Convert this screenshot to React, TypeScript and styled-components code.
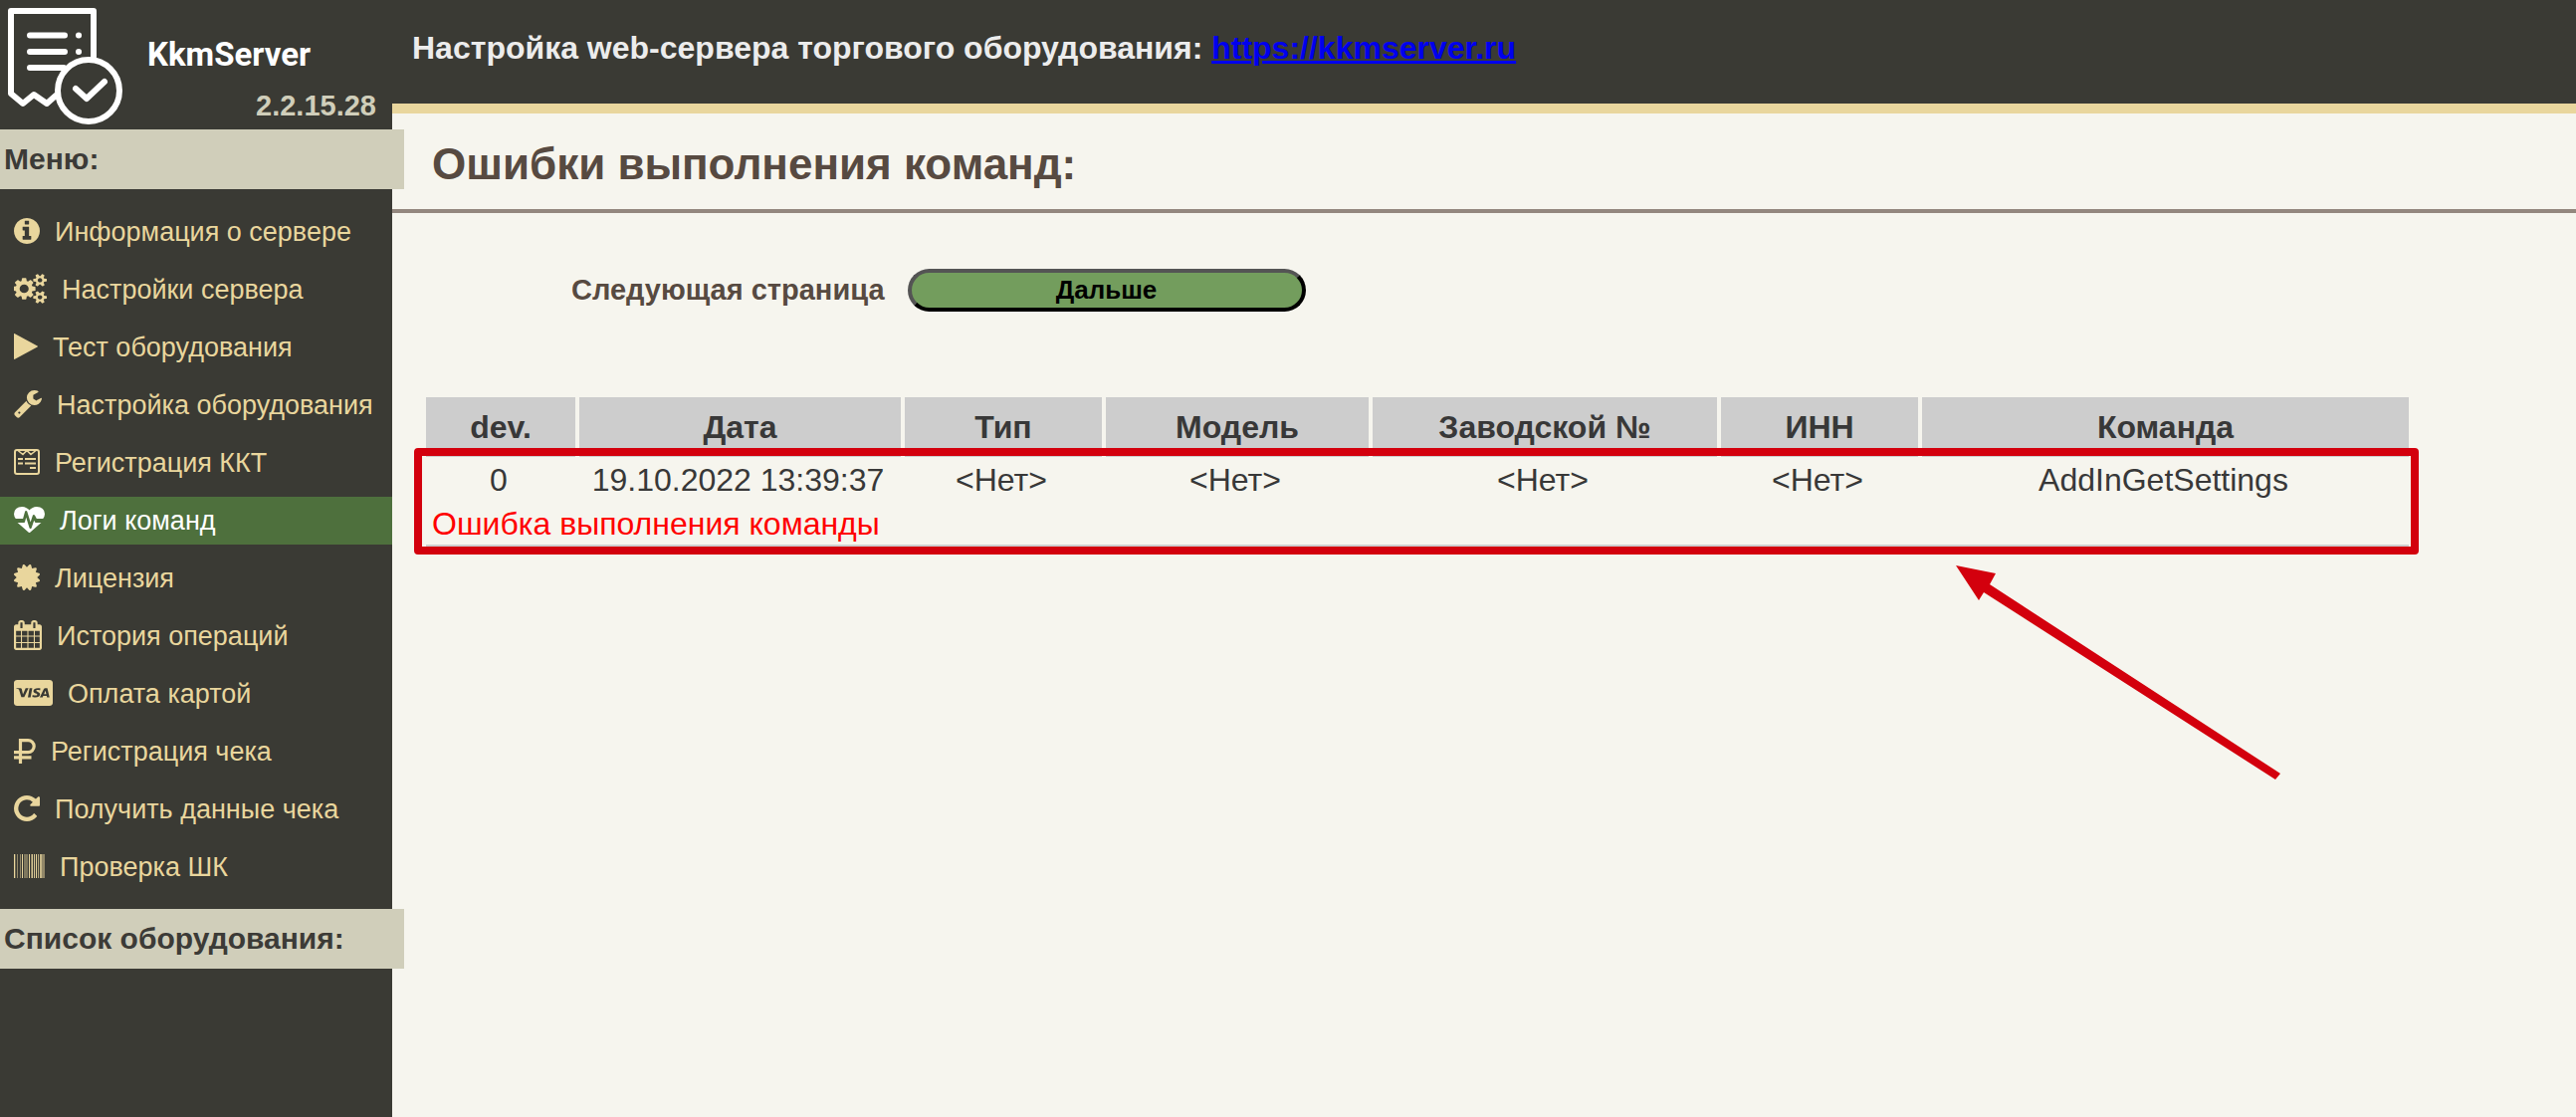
import React from 'react';
import styled, { createGlobalStyle } from 'styled-components';
import { FaCcVisa } from 'react-icons/fa';

const Global = createGlobalStyle`
  * { box-sizing: border-box; }
  body {
    margin: 0;
    background: #f6f5ee;
    color: #383838;
    font-family: "Liberation Sans", Arial, sans-serif;
  }
`;

const Page = styled.div`
  display: grid;
  grid-template-columns: 394px minmax(0, 1fr);
  min-height: 100vh;
`;

const Sidebar = styled.aside`
  background: #3a3a34;
  color: #e9d69d;
`;

const Brand = styled.div`
  display: flex;
  height: 130px;
`;

const Logo = styled.svg`
  flex: none;
  width: 128px;
  height: 130px;
`;

const BrandText = styled.div`
  flex: 1;
  display: flex;
  flex-direction: column;
  padding: 31px 16px 0 20px;
`;

const BrandName = styled.div`
  color: #fff;
  font: 700 33px/48px Roboto, sans-serif;
`;

const Version = styled.div`
  align-self: flex-end;
  color: #d0ceba;
  font-size: 29px;
  font-weight: 700;
  line-height: 54px;
`;

const SectionTitle = styled.h2`
  position: relative;
  width: calc(100% + 12px);
  margin: 0;
  padding-left: 4px;
  background: #d0ceba;
  color: #3c3b37;
  font-size: 30px;
  line-height: 60px;
`;

const Menu = styled.nav`
  display: flex;
  flex-direction: column;
  gap: 10px;
  padding: 19px 0 18px;
`;

const MenuLink = styled.a<{ $active?: boolean }>`
  display: flex;
  align-items: center;
  gap: 15px;
  height: 48px;
  padding: 0 0 2px 14px;
  background: ${(p) => (p.$active ? '#4e703d' : 'transparent')};
  color: ${(p) => (p.$active ? '#fff' : '#e9d69d')};
  font-size: 27px;
  text-decoration: none;
  white-space: nowrap;

  svg {
    flex: none;
    display: block;
  }
  span { padding-top: 3px; }
`;

const CardIcon = styled(FaCcVisa)`
  width: 39px;
  height: 26px;
`;

const Main = styled.main`
  min-width: 0;
`;

const TopBar = styled.header`
  height: 114px;
  padding: 0 20px;
  border-bottom: 10px solid #e9d69d;
  background: #3a3a34;
  color: #ececec;
  font-size: 32px;
  font-weight: 700;
  line-height: 96px;

  a { color: #0000ee; }
`;

const Title = styled.h1`
  margin: 0;
  padding: 6px 40px 0;
  border-bottom: 4px solid #93877e;
  color: #574a41;
  font-size: 44px;
  line-height: 90px;
`;

const Pager = styled.div`
  display: flex;
  align-items: center;
  gap: 23px;
  padding: 56px 0 0 180px;
  color: #574a41;
  font-size: 29px;
  font-weight: 700;
`;

const NextButton = styled.button`
  width: 400px;
  height: 43px;
  padding: 0 0 1px;
  border: 4px outset #000;
  border-radius: 22px;
  background: #739d5d;
  color: #000;
  font: 700 26px "Liberation Sans", Arial, sans-serif;
`;

const LogArea = styled.section`
  position: relative;
  margin: 86px 164px 0 30px;
`;

const LogTable = styled.table`
  width: 100%;
  border-spacing: 4px 0;
  table-layout: fixed;
  font-size: 32px;

  th, td { padding: 0; }
  th {
    height: 60px;
    background: #cdcdcd;
  }
  td {
    height: 46px;
    padding-right: 4px;
    text-align: center;
  }
`;

const ErrorCell = styled.td`
  && {
    height: 44px;
    padding-left: 6px;
    border-bottom: 2px solid #cdcdcd;
    color: #f00;
    text-align: left;
  }
`;

const Frame = styled.div`
  position: absolute;
  left: -8px;
  right: -6px;
  top: 51px;
  height: 107px;
  border: 8px solid #d3000d;
  border-radius: 4px;
`;

const Arrow = styled.svg`
  position: absolute;
  right: 131px;
  top: 169px;
  width: 330px;
  height: 216px;
`;

type GlyphProps = { width: number; box: string; d: string; height?: number };
const Glyph = ({ width, height = 26, box, d }: GlyphProps) => (
  <svg width={width} height={height} viewBox={box} fill="currentColor" preserveAspectRatio="none" aria-hidden="true">
    <path d={d} />
  </svg>
);

const miniCog =
  'v140q0 16-149 31-12 27-30 52 51 113 51 138 0 4-4 7-122 71-124 71-8 0-46-47t-52-68q-20 2-30 2t-30-2q-14 21-52 68t-46 47q-2 0-124-71-4-3-4-7 0-25 51-138-18-25-30-52-149-15-149-31v-140q0-16 149-31 13-29 30-52-51-113-51-138 0-4 4-7 4-2 35-20t59-34 30-16q8 0 46 46.5t52 67.5q20-2 30-2t30 2q51-71 92-112l6-2q4 0 124 70 4 3 4 7 0 25-51 138 17 23 30 52 149 15 149 31z';

const paths = {
  info: 'M1152 1376v-160q0-14-9-23t-23-9h-96v-512q0-14-9-23t-23-9h-320q-14 0-23 9t-9 23v160q0 14 9 23t23 9h96v320h-96q-14 0-23 9t-9 23v160q0 14 9 23t23 9h448q14 0 23-9t9-23zm-128-896v-160q0-14-9-23t-23-9h-192q-14 0-23 9t-9 23v160q0 14 9 23t23 9h192q14 0 23-9t9-23zm640 416q0 209-103 385.5t-279.5 279.5-385.5 103-385.5-103-279.5-279.5-103-385.5 103-385.5 279.5-279.5 385.5-103 385.5 103 279.5 279.5 103 385.5z',
  cogs:
    'M832 896q0-106-75-181t-181-75-181 75-75 181 75 181 181 75 181-75 75-181zm768 512q0-52-38-90t-90-38-90 38-38 90q0 53 37.5 90.5t90.5 37.5 90.5-37.5 37.5-90.5zm0-1024q0-52-38-90t-90-38-90 38-38 90q0 53 37.5 90.5t90.5 37.5 90.5-37.5 37.5-90.5zm-384 421v185q0 10-7 19.5t-16 10.5l-155 24q-11 35-32 76 34 48 90 115 7 11 7 20 0 12-7 19-23 30-82.5 89.5t-78.5 59.5q-11 0-21-7l-115-90q-37 19-77 31-11 108-23 155-7 24-30 24h-186q-11 0-20-7.5t-10-17.5l-23-153q-34-10-75-31l-118 89q-7 7-20 7-11 0-21-8-144-133-144-160 0-9 7-19 10-14 41-53t47-61q-23-44-35-82l-152-24q-10-1-17-9.5t-7-19.5v-185q0-10 7-19.5t16-10.5l155-24q11-35 32-76-34-48-90-115-7-11-7-20 0-12 7-20 22-30 82-89t79-59q11 0 21 7l115 90q34-18 77-32 11-108 23-154 7-24 30-24h186q11 0 20 7.5t10 17.5l23 153q34 10 75 31l118-89q8-7 20-7 11 0 21 8 144 133 144 160 0 8-7 19-12 16-42 54t-45 60q23 48 34 82l152 23q10 2 17 10.5t7 19.5z' +
    'M1856 1338' + miniCog + 'M1856 314' + miniCog,
  play: 'M1576 927l-1328 738q-23 13-39.5 3t-16.5-36v-1472q0-26 16.5-36t39.5 3l1328 738q23 13 23 31t-23 31z',
  wrench: 'M448 1472q0-26-19-45t-45-19-45 19-19 45 19 45 45 19 45-19 19-45zm644-420l-682 682q-37 37-90 37-52 0-91-37l-106-108q-38-36-38-90 0-53 38-91l681-681q39 98 114.5 173.5t173.5 114.5zm634-435q0 39-23 106-47 134-164.5 217.5t-258.5 83.5q-185 0-316.5-131.5t-131.5-316.5 131.5-316.5 316.5-131.5q58 0 121.5 16.5t107.5 46.5q16 11 16 28t-16 28l-293 169v224l193 107q5-3 79-48.5t135.5-81 70.5-35.5q15 0 23.5 10t8.5 25z',
  heart: 'M1280 1024h305q-5 6-10 10.5t-9 7.5l-3 4-623 600q-18 18-44 18t-44-18l-624-602q-5-2-21-20h369q22 0 39.5-13.5t22.5-34.5l70-281 190 667q6 20 23 33t39 13q21 0 38-13t23-33l146-485 56 112q18 35 57 35zm512-556q0 145-103 300h-369l-111-221q-8-17-25.5-27t-36.5-8q-45 5-56 46l-129 430-196-686q-6-20-23.5-33t-39.5-13-39 13.5-22 34.5l-116 464h-423q-103-155-103-300 0-220 127-344t351-124q62 0 126.5 21.5t120 58 95.5 68.5 76 68q36-36 76-68t95.5-68.5 120-58 126.5-21.5q224 0 351 124t127 344z',
  certificate: 'M1504 896l138 135q30 28 20 70-12 41-52 51l-188 48 53 186q12 41-19 70-29 31-70 19l-186-53-48 188q-10 40-51 52-12 2-19 2-31 0-51-22l-135-138-135 138q-28 30-70 20-41-11-51-52l-48-188-186 53q-41 12-70-19-31-29-19-70l53-186-188-48q-40-10-52-51-10-42 20-70l138-135-138-135q-30-28-20-70 12-41 52-51l188-48-53-186q-12-41 19-70 29-31 70-19l186 53 48-188q10-41 51-51 41-12 70 19l135 139 135-139q29-30 70-19 41 10 51 51l48 188 186-53q41-12 70 19 31 29 19 70l-53 186 188 48q40 10 52 51 10 42-20 70z',
  calendar: 'M192 1664h288v-288h-288v288zm352 0h320v-288h-320v288zm-352-352h288v-320h-288v320zm352 0h320v-320h-320v320zm-352-384h288v-288h-288v288zm736 736h320v-288h-320v288zm-384-736h320v-288h-320v288zm768 736h288v-288h-288v288zm-384-352h320v-320h-320v320zm-352-864v-288q0-13-9.5-22.5t-22.5-9.5h-64q-13 0-22.5 9.5t-9.5 22.5v288q0 13 9.5 22.5t22.5 9.5h64q13 0 22.5-9.5t9.5-22.5zm736 864h288v-320h-288v320zm-384-384h320v-288h-320v288zm384 0h288v-288h-288v288zm32-480v-288q0-13-9.5-22.5t-22.5-9.5h-64q-13 0-22.5 9.5t-9.5 22.5v288q0 13 9.5 22.5t22.5 9.5h64q13 0 22.5-9.5t9.5-22.5zm384-64v1280q0 52-38 90t-90 38h-1408q-52 0-90-38t-38-90v-1280q0-52 38-90t90-38h128v-96q0-66 47-113t113-47h64q66 0 113 47t47 113v96h384v-96q0-66 47-113t113-47h64q66 0 113 47t47 113v96h128q52 0 90 38t38 90z',
  repeat: 'M1664 256v448q0 26-19 45t-45 19h-448q-42 0-59-40-17-39 14-69l138-138q-148-137-349-137-104 0-198.5 40.5t-163.5 109.5-109.5 163.5-40.5 198.5 40.5 198.5 109.5 163.5 163.5 109.5 198.5 40.5q119 0 225-52t179-147q7-10 23-12 15 0 25 9l137 138q9 8 9.5 20.5t-7.5 22.5q-109 132-264 204.5t-327 72.5q-156 0-298-61t-245-164-164-245-61-298 61-298 164-245 245-164 298-61q147 0 284.5 55.5t244.5 156.5l130-129q29-31 70-14 39 17 39 59z',
};

const ReceiptIcon = () => (
  <svg width="26" height="26" viewBox="0 0 26 26" fill="none" stroke="currentColor" aria-hidden="true">
    <rect x="1" y="1" width="24" height="24" rx="2" strokeWidth="2" />
    <path d="M4 1.500l5 4 4-4 4 4 5-4" strokeWidth="1.600" />
    <path d="M4 10h5M11 10h11M4 14.500h5M11 14.500h11M16 19h6" strokeWidth="2" />
  </svg>
);

const RubleIcon = () => (
  <svg width="22" height="25" viewBox="0 0 22 25" fill="none" stroke="currentColor" aria-hidden="true">
    <path d="M6.500 25V1.600H14.200a6 6 0 0 1 0 12H0M0 18.800h17.500" strokeWidth="3.200" />
  </svg>
);

const bars: [number, number, number][] = [
  [0, 1, 1], [1, 1, 0.3], [3, 1, 0.5], [6, 1, 0.5], [8, 1, 1], [10, 4, 0.4], [15, 1, 1], [17, 1, 0.5],
  [18, 1, 0.9], [20, 1, 0.9], [22, 1, 1], [24, 1, 0.7], [26, 2, 0.8], [28, 3, 0.5],
];
const BarcodeIcon = () => (
  <svg width="31" height="24" viewBox="0 0 31 24" fill="currentColor" shapeRendering="crispEdges" aria-hidden="true">
    {bars.map(([x, w, o]) => (
      <rect key={x} x={x} width={w} height="24" opacity={o} />
    ))}
  </svg>
);

const menu: { label: string; icon: React.ReactNode; active?: boolean }[] = [
  { label: 'Информация о сервере', icon: <Glyph width={26} box="128 128 1536 1536" d={paths.info} /> },
  { label: 'Настройки сервера', icon: <Glyph width={33} height={30} box="0 0 1856 1792" d={paths.cogs} /> },
  { label: 'Тест оборудования', icon: <Glyph width={24} box="192 118 1408 1556" d={paths.play} /> },
  { label: 'Настройка оборудования', icon: <Glyph width={28} height={28} box="64 128 1664 1664" d={paths.wrench} /> },
  { label: 'Регистрация ККТ', icon: <ReceiptIcon /> },
  { label: 'Логи команд', icon: <Glyph width={31} box="0 0 1792 1664" d={paths.heart} />, active: true },
  { label: 'Лицензия', icon: <Glyph width={26} box="128 128 1536 1536" d={paths.certificate} /> },
  { label: 'История операций', icon: <Glyph width={28} height={30} box="64 0 1664 1792" d={paths.calendar} /> },
  { label: 'Оплата картой', icon: <CardIcon viewBox="0 32 576 448" preserveAspectRatio="none" aria-hidden="true" /> },
  { label: 'Регистрация чека', icon: <RubleIcon /> },
  { label: 'Получить данные чека', icon: <Glyph width={26} box="128 128 1536 1536" d={paths.repeat} /> },
  { label: 'Проверка ШК', icon: <BarcodeIcon /> },
];

const columns = [
  { title: 'dev.', width: 150, value: '0' },
  { title: 'Дата', width: 323, value: '19.10.2022 13:39:37' },
  { title: 'Тип', width: 198, value: '<Нет>' },
  { title: 'Модель', width: 264, value: '<Нет>' },
  { title: 'Заводской №', width: 346, value: '<Нет>' },
  { title: 'ИНН', width: 198, value: '<Нет>' },
  { title: 'Команда', width: 489, value: 'AddInGetSettings' },
];
const total = columns.reduce((sum, c) => sum + c.width, 0);

export default function App() {
  return (
    <Page>
      <Global />
      <Sidebar>
        <Brand>
          <Logo viewBox="0 0 128 130" fill="none" stroke="#fff" strokeWidth="6" strokeLinecap="round" strokeLinejoin="round" aria-hidden="true">
            <path d="M94 57V11H11v83l12 10 11-9 13 9 9-8" />
            <path d="M30 35.500h35M30 52h35M30 68h34M79 35.500h.1M79 52h.1" />
            <circle cx="89" cy="91" r="31" />
            <path d="M76 89l11 10 18-17" />
          </Logo>
          <BrandText>
            <BrandName>KkmServer</BrandName>
            <Version>2.2.15.28</Version>
          </BrandText>
        </Brand>
        <SectionTitle>Меню:</SectionTitle>
        <Menu>
          {menu.map((item) => (
            <MenuLink key={item.label} href="#" $active={item.active}>
              {item.icon}
              <span>{item.label}</span>
            </MenuLink>
          ))}
        </Menu>
        <SectionTitle>Список оборудования:</SectionTitle>
      </Sidebar>
      <Main>
        <TopBar>
          Настройка web-сервера торгового оборудования: <a href="https://kkmserver.ru">https://kkmserver.ru</a>
        </TopBar>
        <Title>Ошибки выполнения команд:</Title>
        <Pager>
          <label htmlFor="next-page">Следующая страница</label>
          <NextButton id="next-page" type="button">Дальше</NextButton>
        </Pager>
        <LogArea>
          <LogTable>
            <colgroup>
              {columns.map((c) => (
                <col key={c.title} style={{ width: `${(c.width / total) * 100}%` }} />
              ))}
            </colgroup>
            <thead>
              <tr>
                {columns.map((c) => (
                  <th key={c.title} scope="col">{c.title}</th>
                ))}
              </tr>
            </thead>
            <tbody>
              <tr>
                {columns.map((c) => (
                  <td key={c.title}>{c.value}</td>
                ))}
              </tr>
              <tr>
                <ErrorCell colSpan={columns.length}>Ошибка выполнения команды</ErrorCell>
              </tr>
            </tbody>
          </LogTable>
          <Frame />
          <Arrow viewBox="0 0 330 216" aria-hidden="true">
            <path d="M2 0L42 8L36 19L328 209L323 215L30 27L25 35Z" fill="#d3000d" />
          </Arrow>
        </LogArea>
      </Main>
    </Page>
  );
}
